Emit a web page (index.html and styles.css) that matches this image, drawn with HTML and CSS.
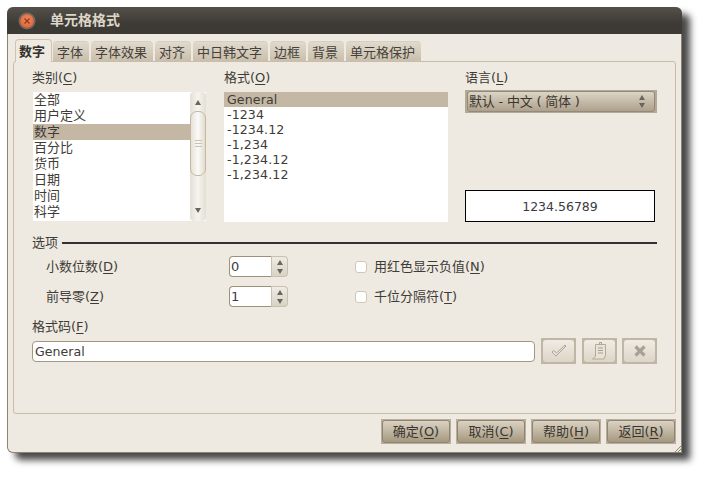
FILE: index.html
```html
<!DOCTYPE html>
<html lang="zh">
<head>
<meta charset="utf-8">
<title>单元格格式</title>
<link rel="stylesheet" href="styles.css">
</head>
<body>
<div class="window">
  <header class="titlebar">
    <span class="close"><svg width="8" height="8" viewBox="0 0 8 8"><path d="M1.500 1.500l5 5M6.500 1.500l-5 5" stroke="#8a3a1c" stroke-width="1.200"/></svg></span>
    <span class="title">单元格格式</span>
  </header>
  <div class="content">
    <nav class="tabs">
      <span class="tab active">数字</span>
      <span class="tab">字体</span>
      <span class="tab">字体效果</span>
      <span class="tab">对齐</span>
      <span class="tab">中日韩文字</span>
      <span class="tab">边框</span>
      <span class="tab">背景</span>
      <span class="tab">单元格保护</span>
    </nav>
    <section class="panel">
      <div class="top-row">
        <div class="col col-cat">
          <div class="label">类别(<u>C</u>)</div>
          <div class="listbox cat">
            <ul class="list cat-list">
              <li>全部</li>
              <li>用户定义</li>
              <li class="sel">数字</li>
              <li>百分比</li>
              <li>货币</li>
              <li>日期</li>
              <li>时间</li>
              <li>科学</li>
            </ul>
            <div class="scrollbar">
              <span class="arrow up"></span>
              <div class="thumb"><i></i><i></i><i></i></div>
              <span class="arrow down"></span>
            </div>
          </div>
        </div>
        <div class="col col-fmt">
          <div class="label">格式(<u>O</u>)</div>
          <ul class="list fmt-list">
            <li class="sel">General</li>
            <li>-1234</li>
            <li>-1234.12</li>
            <li>-1,234</li>
            <li>-1,234.12</li>
            <li>-1,234.12</li>
          </ul>
        </div>
        <div class="col col-lang">
          <div class="label">语言(<u>L</u>)</div>
          <div class="select-frame">
            <div class="select">
              <span class="select-text">默认 - 中文 ( 简体 )</span>
              <span class="updown"><span class="arrow up"></span><span class="arrow down"></span></span>
            </div>
          </div>
          <div class="preview">1234.56789</div>
        </div>
      </div>

      <div class="options-head"><span>选项</span><span class="rule"></span></div>

      <div class="opt-row first">
        <span class="opt-label">小数位数(<u>D</u>)</span>
        <div class="spin">
          <span class="spin-entry">0</span>
          <span class="spin-btns"><span class="arrow up"></span><span class="arrow down"></span></span>
        </div>
        <span class="check"></span>
        <span class="check-label">用红色显示负值(<u>N</u>)</span>
      </div>
      <div class="opt-row">
        <span class="opt-label">前导零(<u>Z</u>)</span>
        <div class="spin">
          <span class="spin-entry">1</span>
          <span class="spin-btns"><span class="arrow up"></span><span class="arrow down"></span></span>
        </div>
        <span class="check"></span>
        <span class="check-label">千位分隔符(<u>T</u>)</span>
      </div>

      <div class="label code-label">格式码(<u>F</u>)</div>
      <div class="code-row">
        <div class="entry">General</div>
        <span class="tool t1"><span class="tool-in"><svg width="18" height="14" viewBox="0 0 18 14"><path d="M2 8l4 4L16 2l-1-1L6.500 9 3.500 6.500z" fill="#ece7dd" stroke="#aba294" stroke-width="1"/></svg></span></span>
        <span class="tool t2"><span class="tool-in"><svg width="18" height="20" viewBox="0 0 18 20"><path d="M4.500 3.500h10v10.500l-1.500 4H1.500l3-2.500z" fill="#e8e2d7" stroke="#b3aa9b"/><path d="M8.500 3.500V1.500h2v2M7 7h5M7 9.500h5M7 12h5" fill="none" stroke="#a89f90"/></svg></span></span>
        <span class="tool t3"><span class="tool-in"><svg width="14" height="14" viewBox="0 0 14 14"><path d="M2.500 2.500l9 9M11.500 2.500l-9 9" stroke="#a8a194" stroke-width="3.200"/></svg></span></span>
      </div>
    </section>
    <footer class="footer">
      <span class="btn"><span class="btn-in">确定(<u>O</u>)</span></span>
      <span class="btn"><span class="btn-in">取消(<u>C</u>)</span></span>
      <span class="btn"><span class="btn-in">帮助(<u>H</u>)</span></span>
      <span class="btn"><span class="btn-in">返回(<u>R</u>)</span></span>
    </footer>
    <svg class="grip" width="6" height="6" viewBox="0 0 6 6"><path d="M0 6L6 0M3 6l3-3" stroke="#8c8471" fill="none"/></svg>
  </div>
</div>
</body>
</html>
```

FILE: styles.css
```css
* { box-sizing: border-box; }
html, body { margin: 0; height: 100%; background: #fff; }
body {
  padding: 7px 0 0 7px;
  font-family: "DejaVu Sans", "Noto Sans CJK SC", sans-serif;
  font-size: 13px;
  line-height: 15px;
  color: #3f3c37;
  overflow: hidden;
}
u { text-underline-offset: 2px; text-decoration-thickness: 1px; }
ul { margin: 0; padding: 0; list-style: none; }

.window {
  width: 675px;
  height: 446px;
  display: flex;
  flex-direction: column;
  background: #eeeae2;
  border-radius: 6px 6px 1px 6px;
  box-shadow: 8px 7px 7px rgba(0, 0, 0, 0.72);
}

.titlebar {
  height: 27px;
  flex: none;
  display: flex;
  align-items: center;
  padding-left: 13px;
  background: linear-gradient(#54514b, #3e3b36 60%, #3c3a35);
  border-radius: 6px 6px 0 0;
}
.close {
  width: 14px;
  height: 14px;
  display: flex;
  align-items: center;
  justify-content: center;
  border-radius: 50%;
  background: radial-gradient(circle at 50% 40%, #f08a5c, #d8592f);
  box-shadow: 0 0 0 1.500px #6e6b65;
}
.title {
  margin-left: 16px;
  font-size: 14px;
  font-weight: bold;
  color: #dcd6c8;
}

.content {
  position: relative;
  flex: 1;
  display: flex;
  flex-direction: column;
  padding: 0 5px;
  border: 1px solid #8c8471;
  border-top: 0;
  border-radius: 0 0 1px 6px;
}

.tabs {
  position: relative;
  z-index: 1;
  height: 23px;
  margin: 5px 0 -1px 2px;
  display: flex;
  align-items: flex-end;
  gap: 2px;
}
.tab {
  height: 21px;
  padding: 3px 6px 0 4px;
  border-radius: 4px 4px 0 0;
  background: linear-gradient(#e0dacd, #c9bdaa);
  border-top: 1px solid #d6cfc0;
  color: #45413a;
  white-space: nowrap;
}
.tab.active {
  height: 23px;
  margin-right: -1px;
  padding: 4px 6px 0 3px;
  font-weight: bold;
  color: #33302b;
  background: #eeeae2;
  border: 1px solid #cdc4b3;
  border-bottom: 0;
}

.panel {
  height: 353px;
  flex: none;
  padding: 8px 18px 0;
  border: 1px solid #c6bca9;
  border-radius: 3px;
}

.top-row { display: flex; }
.col { display: flex; flex-direction: column; }
.col-cat { width: 192px; }
.col-fmt { width: 241px; }
.col-lang { width: 192px; }
.label { height: 22px; }
.code-label { height: 19px; margin-top: 12px; }

.list li { padding-left: 1px; white-space: nowrap; }
.list .sel { background: #c4b8a5; }

.listbox.cat {
  width: 173px;
  height: 129px;
  margin-left: 1px;
  display: flex;
  background: #fff;
}
.cat-list { flex: 1; }
.cat-list li { height: 16px; line-height: 16px; }

.scrollbar {
  position: relative;
  width: 16px;
  display: flex;
  flex-direction: column;
  align-items: center;
  justify-content: space-between;
  padding: 8px 0;
  border-radius: 4px;
  background: linear-gradient(90deg, #e4dfd4, #f6f4ef 50%, #e4dfd4);
}
.thumb {
  position: absolute;
  top: 19px;
  left: 0;
  width: 16px;
  height: 65px;
  display: flex;
  flex-direction: column;
  align-items: center;
  justify-content: center;
  gap: 2px;
  border: 1px solid #c3b8a2;
  border-radius: 7px;
  background: linear-gradient(90deg, #e6e1d7, #fbfaf7 50%, #e2dccf);
}
.thumb i { width: 7px; height: 1px; background: #c9c1b2; }

.arrow { width: 0; height: 0; border-left: 3.500px solid transparent; border-right: 3.500px solid transparent; }
.arrow.up { border-bottom: 5px solid #6b665c; }
.arrow.down { border-top: 5px solid #6b665c; }

.fmt-list {
  width: 224px;
  height: 130px;
  background: #fff;
}
.fmt-list li { height: 15px; line-height: 15px; padding-left: 3px; font-size: 12.600px; letter-spacing: 0.100px; }

.select-frame {
  height: 23px;
  margin-top: -2px;
  padding: 1px 2px;
  background: #b3a997;
}
.select {
  height: 21px;
  display: flex;
  align-items: center;
  justify-content: space-between;
  padding: 0 9px 0 1px;
  border: 1px solid #94897a;
  border-radius: 3px;
  background: linear-gradient(#dcd4c5, #aea18c);
  color: #3a362f;
}
.select-text { letter-spacing: -0.200px; }
.updown { display: flex; flex-direction: column; gap: 3px; }

.preview {
  width: 190px;
  height: 32px;
  margin-top: auto;
  display: flex;
  align-items: center;
  justify-content: center;
  background: #fff;
  border: 1px solid #000;
  font-size: 12.500px;
  color: #3c3b45;
}

.options-head {
  height: 15px;
  margin-top: 13px;
  display: flex;
  align-items: center;
  gap: 4px;
}
.rule { flex: 1; height: 2px; background: #34322e; }

.opt-row {
  height: 21px;
  margin-top: 9px;
  padding-left: 14px;
  display: flex;
  align-items: center;
}
.opt-row.first { margin-top: 6px; }
.opt-label { width: 183px; }

.spin { width: 59px; height: 21px; display: flex; }
.spin-entry {
  width: 43px;
  padding-left: 1px;
  line-height: 19px;
  background: #fff;
  border: 1px solid #9d9178;
  border-right-color: #c9c0ae;
  border-radius: 4px 0 0 4px;
  color: #3c3b45;
}
.spin-btns {
  width: 16px;
  display: flex;
  flex-direction: column;
  align-items: center;
  justify-content: center;
  gap: 4px;
  margin-right: -1px;
  background: linear-gradient(#efece5, #d9d2c5);
  border: 1px solid #c9c0ae;
  border-left: 0;
  border-radius: 0 4px 4px 0;
}

.check {
  width: 12px;
  height: 12px;
  margin-left: 67px;
  background: #fff;
  border: 1px solid #cfc7b8;
  border-radius: 3px;
}
.check-label { margin-left: 7px; }

.code-row {
  height: 26px;
  display: flex;
  align-items: center;
}
.entry {
  width: 503px;
  height: 21px;
  padding-left: 2px;
  line-height: 19px;
  font-size: 12.600px;
  background: #fff;
  border: 1px solid #a3977f;
  border-radius: 4px;
}
.tool {
  width: 35px;
  height: 26px;
  padding: 2px;
  background: #c0b6a5;
  display: flex;
}
.tool-in {
  flex: 1;
  display: flex;
  align-items: center;
  justify-content: center;
  border-radius: 3px;
  background: linear-gradient(#f0ece4, #dcd5c8);
}
.t1 { margin-left: 6px; }
.t2 { margin-left: 6px; }
.t3 { margin-left: 5px; }

.footer {
  height: 25px;
  margin-top: 5px;
  display: flex;
  justify-content: flex-end;
  gap: 5px;
}
.btn {
  width: 70px;
  padding: 1px;
  display: flex;
  background: #b9ae9c;
}
.btn-in {
  flex: 1;
  display: flex;
  align-items: center;
  justify-content: center;
  border: 1px solid #8f8571;
  border-radius: 3px;
  background: linear-gradient(#dad2c3, #a5987f);
  color: #3a362f;
}

.grip { position: absolute; right: 0; bottom: 0; }
```
